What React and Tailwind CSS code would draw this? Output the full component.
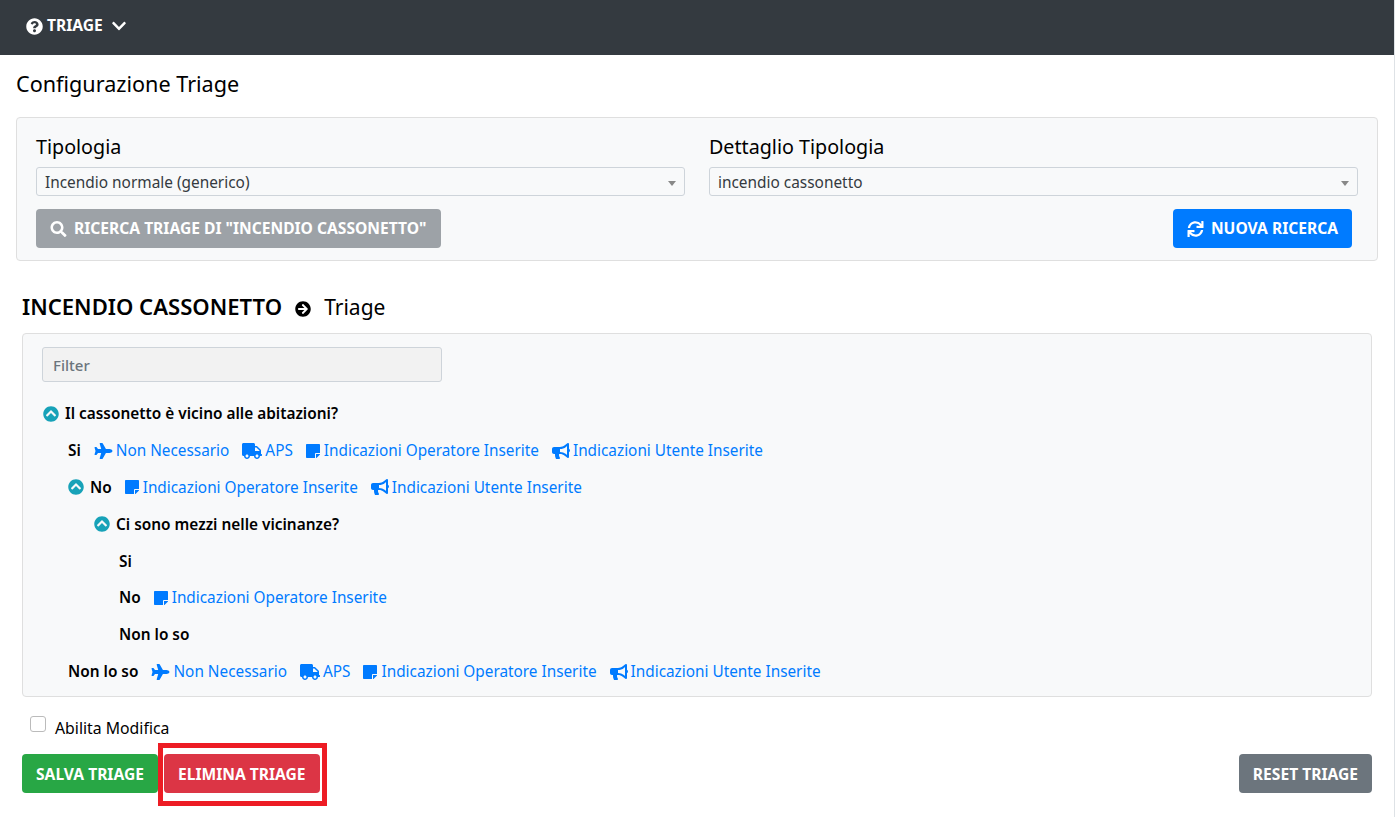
import React from "react";
import { FaQuestionCircle, FaChevronDown, FaSearch, FaSync, FaArrowCircleRight, FaChevronCircleUp, FaPlane, FaTruck, FaStickyNote, FaBullhorn } from "react-icons/fa";

const Lnk = ({ icon, children }) => (
  <span className="inline-flex items-center text-[#007bff] text-[15.33px]">
    {icon}
    {children}
  </span>
);
const Up = () => <FaChevronCircleUp className="w-[16px] h-[16px] text-[#17a2b8] mr-[6px] shrink-0" />;
const Note = () => <Lnk icon={<FaStickyNote className="w-[14px] h-[16px] mr-[4px] shrink-0" />}>Indicazioni Operatore Inserite</Lnk>;
const Horn = () => <Lnk icon={<FaBullhorn className="w-[18px] h-[16px] mr-[3px] shrink-0" />}>Indicazioni Utente Inserite</Lnk>;
const Plane = () => <Lnk icon={<FaPlane className="w-[19px] h-[16px] mr-[3px] shrink-0" />}>Non Necessario</Lnk>;
const Truck = () => <Lnk icon={<FaTruck className="w-[20px] h-[16px] mr-[3px] shrink-0" />}>APS</Lnk>;

const Row = ({ pl, children }) => (
  <div className="h-[36.85px] flex items-center whitespace-nowrap gap-[13px]" style={{ paddingLeft: pl }}>{children}</div>
);
const B = ({ children }) => <b className="font-semibold text-black">{children}</b>;

const Sel = ({ label, value }) => (
  <div className="flex-1">
    <div className="text-[19.7px] leading-[28px] text-black mb-[6px] h-[29px] pt-[1px]">{label}</div>
    <div className="relative h-[29px] border border-[#ced4da] rounded-[3px] bg-[#f8f9fa] pl-[8px] pt-[2px] flex items-center text-[15.4px] text-[#343a40]">
      {value}
      <span className="absolute right-[8px] top-[13px] w-0 h-0 border-x-[4px] border-x-transparent border-t-[5px] border-t-[#888]" />
    </div>
  </div>
);
const Btn = ({ cls, children }) => (
  <div className={"h-[39px] rounded-[4px] px-[14px] flex items-center text-white font-bold text-[15.6px] uppercase whitespace-nowrap " + cls}>{children}</div>
);

export default function App() {
  return (
    <div className="w-[1395px] h-[817px] border-r border-[#dee2e6] bg-white overflow-hidden text-[15.4px] text-black" style={{ fontFamily: '"Noto Sans", sans-serif' }}>
      <div className="h-[55px] bg-[#343a40] flex items-center pl-[26px] pb-[3px] text-white font-bold text-[15.6px]">
        <FaQuestionCircle className="w-[17px] h-[17px] mr-[4px]" />
        TRIAGE
        <FaChevronDown className="w-[16px] h-[16px] ml-[8px]" />
      </div>
      <div className="px-[16px]">
        <div className="h-[62px] flex items-center pb-[3px] text-[21.6px] text-black">Configurazione Triage</div>
        <div className="h-[144px] border border-[#dfdfdf] rounded-[4px] bg-[#f8f9fa] px-[19px] pt-[14px]">
          <div className="flex gap-[24px]">
            <Sel label="Tipologia" value="Incendio normale (generico)" />
            <Sel label="Dettaglio Tipologia" value="incendio cassonetto" />
          </div>
          <div className="flex justify-between mt-[13px] pr-[6px]">
            <Btn cls="bg-[#9da2a7]"><FaSearch className="w-[17px] h-[16px] mr-[7px]" />Ricerca triage di "incendio cassonetto"</Btn>
            <Btn cls="bg-[#007bff]"><FaSync className="w-[17px] h-[16px] mr-[7px]" />Nuova ricerca</Btn>
          </div>
        </div>
      </div>
      <div className="px-[22px]">
        <div className="h-[72px] flex items-center pt-[20px] text-[21px] text-black">
          <span className="font-semibold text-[22.1px]">INCENDIO CASSONETTO</span>
          <FaArrowCircleRight className="w-[16px] h-[16px] ml-[13px] mr-[13px] mt-[3px]" />
          <span className="mt-[1px]">Triage</span>
        </div>
        <div className="h-[364px] border border-[#dfdfdf] rounded-[4px] bg-[#f8f9fa] px-[19px] pt-[13px]">
          <div className="w-[400px] h-[35px] border border-[#ced4da] rounded-[3px] bg-[#f2f2f2] flex items-center pl-[10px] pt-[1px] text-[15px] text-[#6c757d] font-medium">Filter</div>
          <div className="mt-[13.3px]">
            <Row pl={1}><span className="flex items-center"><Up /><B>Il cassonetto è vicino alle abitazioni?</B></span></Row>
            <Row pl={26}><B>Si</B><Plane /><Truck /><Note /><Horn /></Row>
            <Row pl={26}><span className="flex items-center"><Up /><B>No</B></span><Note /><Horn /></Row>
            <Row pl={52}><span className="flex items-center"><Up /><B>Ci sono mezzi nelle vicinanze?</B></span></Row>
            <Row pl={77}><B>Si</B></Row>
            <Row pl={77}><B>No</B><Note /></Row>
            <Row pl={77}><B>Non lo so</B></Row>
            <Row pl={26}><B>Non lo so</B><Plane /><Truck /><Note /><Horn /></Row>
          </div>
        </div>
        <div className="h-[57px] flex items-center pl-[8px] pt-[7px]">
          <span className="w-[16px] h-[16px] border border-[#bbb] rounded-[3px] bg-white mr-[9px] -mt-[10px]" />
          <span className="text-[15.8px]">Abilita Modifica</span>
        </div>
        <div className="flex justify-between">
          <div className="flex">
            <Btn cls="bg-[#28a745] pt-[2px]">Salva triage</Btn>
            <div className="relative ml-[6px]">
              <Btn cls="bg-[#dc3545] pt-[2px]">Elimina triage</Btn>
              <span className="absolute -left-[6px] -right-[7px] -top-[11px] -bottom-[13px] border-[5px] border-[#ed1c24]" />
            </div>
          </div>
          <Btn cls="bg-[#6c757d] pt-[2px]">Reset triage</Btn>
        </div>
      </div>
    </div>
  );
}
